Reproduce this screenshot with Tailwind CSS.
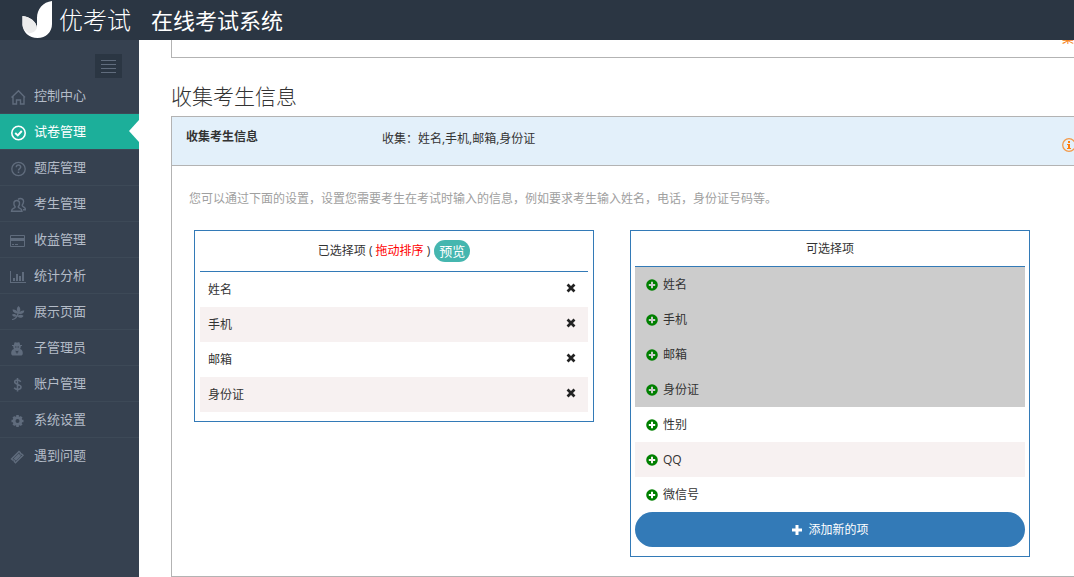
<!DOCTYPE html>
<html lang="zh-CN">
<head>
<meta charset="utf-8">
<title>在线考试系统</title>
<script src="https://cdn.jsdelivr.net/npm/@tailwindcss/browser@4"></script>
</head>
<body class="flex h-screen flex-col overflow-hidden bg-white font-['Open_Sans','Noto_Sans_CJK_SC',sans-serif] text-xs text-[#333]">
<svg class="hidden" aria-hidden="true">
  <symbol id="plus-circle" viewBox="0 0 12 12"><path fill="green" fill-rule="evenodd" d="M6 .2a5.800 5.800 0 1 1 0 11.600A5.800 5.800 0 0 1 6 .2zM5 2.800V5H2.800v2H5v2.200h2V7h2.200V5H7V2.800z"/></symbol>
  <symbol id="cross" viewBox="0 0 10 10"><path d="M2.500 2.500 7.500 7.500M7.500 2.500 2.500 7.500" stroke="#222" stroke-width="2.700" stroke-linecap="square"/></symbol>
</svg>

<header class="flex h-10 shrink-0 items-center bg-[#2b3643] pl-[22px] text-white">
  <a href="#" class="flex items-center gap-[7px]">
    <svg class="mb-[2px] h-[38px] w-[30px]" viewBox="0 0 30 38" aria-hidden="true">
      <path fill="#fff" d="M30 1v23c0 8-6 14-14.500 14C7 38 1 32 .5 25V16C8 17 14 21 15 28V18C15 9 21 2 30 1z"/>
      <path fill="#ececec" d="M.5 16C8 17 14 21 15 28c-1 3-4 5-8 5.500C3 31 .5 28 .5 25z"/>
    </svg>
    <span class="text-2xl leading-10 font-light">优考试</span>
  </a>
  <span class="ml-5 text-[22px] leading-10">在线考试系统</span>
</header>

<div class="flex min-h-0 flex-1">
  <aside class="w-[139px] shrink-0 bg-[#364150]">
    <div class="flex justify-end pt-[14px] pr-[17px]">
      <button aria-label="收起菜单" class="flex h-6 w-[27px] items-center justify-center bg-[#2b3643]">
        <svg class="h-[13px] w-[15px]" viewBox="0 0 15 13" stroke="#606c7d"><path d="M0 .5h15M0 4.500h15M0 8.500h15M0 12.500h15"/></svg>
      </button>
    </div>
    <nav class="text-[13px] leading-[35px] text-[#b4bcc8]">
      <a href="#" class="flex items-center gap-2 border-b border-[#3d4957] pl-[10px]">
        <svg class="mt-[2px] size-4 shrink-0" viewBox="0 0 16 16" fill="none" stroke="#606c7d" stroke-width="1.400"><path d="M1.500 8.500 8.500 1.800l6.500 6.700M3 7.500V15h3.500v-4h4v4H14V7.500"/></svg>控制中心</a>
      <a href="#" aria-current="page" class="relative flex items-center gap-2 border-b border-[#3d4957] bg-[#1caf9a] bg-clip-padding pl-[10px] text-white">
        <svg class="mt-[2px] size-4 shrink-0" viewBox="0 0 16 16" fill="none" stroke="#fff" stroke-width="1.600"><circle cx="8.500" cy="8" r="6.700"/><path d="m5.200 8 2.600 2.500 4-4.500" stroke-width="1.900"/></svg>试卷管理
        <svg class="absolute top-[6px] right-0 h-[22px] w-[10px]" viewBox="0 0 10 22" fill="#fff"><path d="M10 0v22L0 11z"/></svg></a>
      <a href="#" class="flex items-center gap-2 border-b border-[#3d4957] pl-[10px]">
        <svg class="mt-[2px] size-4 shrink-0" viewBox="0 0 16 16" fill="none" stroke="#606c7d" stroke-width="1.300"><circle cx="8.500" cy="8" r="6.700"/><path d="M6.300 6.300c0-3 4.400-2.800 4.400-.3 0 1.600-2.200 1.700-2.200 3.500M8.500 10.500V12" stroke-width="1.500"/></svg>题库管理</a>
      <a href="#" class="flex items-center gap-2 border-b border-[#3d4957] pl-[10px]">
        <svg class="mt-[2px] size-4 shrink-0" viewBox="0 0 16 16" fill="none" stroke="#606c7d" stroke-width="1.400"><path d="M5.200 10C3 7 3.500 3.500 6.700 3.500S10.500 7 8.200 10c0 1.500 3.800 1 3.800 4.300H1.500C1.500 11 5.200 11.500 5.200 10z"/><path d="M8 2.500c.7-.8 1.500-1 2.500-1 3.300 0 4 3.500 1.700 6.700 0 1.800 3.300 1.500 3.300 4.500H13"/></svg>考生管理</a>
      <a href="#" class="flex items-center gap-2 border-b border-[#3d4957] pl-[10px]">
        <svg class="mt-[2px] size-4 shrink-0" viewBox="0 0 16 16" fill="#606c7d"><path fill-rule="evenodd" d="M1 2h13a1 1 0 0 1 1 1v10a1 1 0 0 1-1 1H1a1 1 0 0 1-1-1V3a1 1 0 0 1 1-1zm0 1v2h13V3zm0 5v5h13V8z"/><path d="M2 11h2v1H2zM5 11h3v1H5z"/></svg>收益管理</a>
      <a href="#" class="flex items-center gap-2 border-b border-[#3d4957] pl-[10px]">
        <svg class="mt-[2px] size-4 shrink-0" viewBox="0 0 16 16" fill="#606c7d"><path d="M0 2h1v11h15v1H0zM3 9h2v3H3zM6 5h2v7H6zM9 7h2v5H9zM12 3h2v9h-2z"/></svg>统计分析</a>
      <a href="#" class="flex items-center gap-2 border-b border-[#3d4957] pl-[10px]">
        <svg class="mt-[2px] size-4 shrink-0" viewBox="0 0 16 16" fill="#606c7d"><path d="M2 15c2.500 0 4.500-1.300 5.500-3.500 2 2 5.200 1.500 6-.8-1.700-1.200-3.700-1.200-5.400-.2l.7-1.800c3 .8 5.400-.7 5.500-3.200-2.200-.3-4 .5-4.900 2C11 5.500 10.500 2.500 8.500 1 6.700 2.500 6.300 4.800 7.700 7 6.700 5.200 4.700 4 2.500 4.500c.2 2.500 2 4 4.900 3.900l-.9 2C5.200 8.800 3.500 8.500 2 9.500c.6 1.700 2 2.500 4 2.100C5 13.300 3.700 14 2 14z"/></svg>展示页面</a>
      <a href="#" class="flex items-center gap-2 border-b border-[#3d4957] pl-[10px]">
        <svg class="mt-[2px] size-4 shrink-0" viewBox="0 0 16 16" fill="#606c7d"><path fill-rule="evenodd" d="M4.500 1.500c1-.8 1.500 0 2.500 0s1.500-.8 2.500 0l.7 2.500H12v1h-1.200c0 1.500-.3 2.200-.8 3 2 .5 2.800 2 2.800 4.200 0 1.500-.8 2.300-2.200 2.300H3.400c-1.400 0-2.200-.8-2.200-2.300C1.200 10 2 8.500 4 8c-.5-.8-.8-1.500-.8-3H2V4h1.800zM5 5.500v1h1.500v-1zm2.500 0v1H9v-1zM5.500 9.500l.7 3.500.8-2.500.8 2.500.7-3.500-1.500.8z"/></svg>子管理员</a>
      <a href="#" class="flex items-center gap-2 border-b border-[#3d4957] pl-[10px]">
        <svg class="mt-[2px] size-4 shrink-0" viewBox="0 0 16 16" fill="none" stroke="#606c7d" stroke-width="1.600"><path d="M7.500 1v13.500M10.700 4.800C9.500 2.500 4.700 2.300 4.700 5.100c0 3 6.300 1.800 6.300 5 0 3-5.300 3-6.800.7"/></svg>账户管理</a>
      <a href="#" class="flex items-center gap-2 border-b border-[#3d4957] pl-[10px]">
        <svg class="mt-[2px] size-4 shrink-0" viewBox="0 0 16 16" fill="none" stroke="#606c7d"><circle cx="7.500" cy="8" r="3.400" stroke-width="2.800"/><path d="M7.500 2v2M7.500 12v2M1.500 8h2M11.500 8h2M3.300 3.800l1.400 1.400M10.300 10.800l1.400 1.400M11.700 3.800l-1.400 1.400M4.700 10.800l-1.400 1.400" stroke-width="2.600"/></svg>系统设置</a>
      <a href="#" class="flex items-center gap-2 pl-[10px]">
        <svg class="mt-[2px] size-4 shrink-0" viewBox="0 0 16 16" fill="none" stroke="#606c7d"><path d="M1.500 10 9 2.500l1.200 1a1.200 1.200 0 0 0 1.500 1.500L13 6.200 5.500 13.700l-1.200-1.200A1.200 1.200 0 0 0 2.700 11z" stroke-width="1.400"/><path d="m4.800 10.600 5-5" stroke-width="3.400"/></svg>遇到问题</a>
    </nav>
  </aside>

  <main class="min-w-0 flex-1 overflow-hidden pl-8">
    <section class="flex h-[18px] items-start justify-end border-b border-l border-[#b3b3b3]">
      <span class="-mt-[7px] leading-3 text-[#f58220]">集</span>
    </section>

    <h2 class="mt-[22px] mb-1 text-[21px] leading-8 font-light">收集考生信息</h2>

    <section class="border-y border-l border-[#b3b3b3]">
      <div class="flex h-12 bg-[#e3f0fa] pl-[14px]">
        <h3 class="w-[196px] shrink-0 pt-[10px] leading-5 font-bold">收集考生信息</h3>
        <p class="flex-1 pt-3 leading-5">收集：姓名,手机,邮箱,身份证</p>
        <button aria-label="说明" class="mt-[21px] -mr-[2px] h-[14px] w-[14px]">
          <svg class="size-[14px]" viewBox="0 0 14 14"><circle cx="7" cy="7" r="6.300" fill="none" stroke="#f39a4a" stroke-width="1.300"/><path fill="#ff7f0e" d="M6 3h2v2H6zM5 6h3v4h1v1H5v-1h1V7H5z"/></svg>
        </button>
      </div>
      <div class="border-t border-[#b3b3b3] pt-[23px] pr-11 pb-[19px] pl-[22px]">
        <p class="-ml-[5px] leading-5 text-[#a0a0a0]">您可以通过下面的设置，设置您需要考生在考试时输入的信息，例如要求考生输入姓名，电话，身份证号码等。</p>
        <div class="mt-[21px] grid grid-cols-2 items-start gap-x-9">
          <section class="border border-[#337ab7] px-[5px] pb-[9px]">
            <div class="flex h-[41px] items-center justify-center gap-1 border-b border-[#337ab7]">
              <h4>已选择项 ( <span class="text-[#f00]">拖动排序</span> )</h4>
              <button class="rounded-full bg-[#45b6af] px-[5px] text-[13px] leading-[22px] text-white">预览</button>
            </div>
            <ul class="leading-[35px]">
              <li class="flex items-center justify-between pr-3 pl-2">姓名<button aria-label="移除姓名"><svg class="mb-1 size-[10px]"><use href="#cross"/></svg></button></li>
              <li class="flex items-center justify-between bg-[#f7f1f1] pr-3 pl-2">手机<button aria-label="移除手机"><svg class="mb-1 size-[10px]"><use href="#cross"/></svg></button></li>
              <li class="flex items-center justify-between pr-3 pl-2">邮箱<button aria-label="移除邮箱"><svg class="mb-1 size-[10px]"><use href="#cross"/></svg></button></li>
              <li class="flex items-center justify-between bg-[#f7f1f1] pr-3 pl-2">身份证<button aria-label="移除身份证"><svg class="mb-1 size-[10px]"><use href="#cross"/></svg></button></li>
            </ul>
          </section>
          <section class="border border-[#337ab7] px-1 pb-[9px]">
            <h4 class="border-b border-[#337ab7] text-center leading-[35px]">可选择项</h4>
            <ul class="leading-[35px]">
              <li class="bg-[#ccc]"><button class="flex w-full items-center gap-[5px] pl-[11px]"><svg class="size-3"><use href="#plus-circle"/></svg>姓名</button></li>
              <li class="bg-[#ccc]"><button class="flex w-full items-center gap-[5px] pl-[11px]"><svg class="size-3"><use href="#plus-circle"/></svg>手机</button></li>
              <li class="bg-[#ccc]"><button class="flex w-full items-center gap-[5px] pl-[11px]"><svg class="size-3"><use href="#plus-circle"/></svg>邮箱</button></li>
              <li class="bg-[#ccc]"><button class="flex w-full items-center gap-[5px] pl-[11px]"><svg class="size-3"><use href="#plus-circle"/></svg>身份证</button></li>
              <li><button class="flex w-full items-center gap-[5px] pl-[11px]"><svg class="size-3"><use href="#plus-circle"/></svg>性别</button></li>
              <li class="bg-[#f7f1f1]"><button class="flex w-full items-center gap-[5px] pl-[11px]"><svg class="size-3"><use href="#plus-circle"/></svg>QQ</button></li>
              <li><button class="flex w-full items-center gap-[5px] pl-[11px]"><svg class="size-3"><use href="#plus-circle"/></svg>微信号</button></li>
            </ul>
            <button class="flex w-full items-center justify-center gap-[5px] rounded-full bg-[#337ab7] leading-[35px] text-white"><svg class="mt-[1px] size-3" viewBox="0 0 12 12"><path d="M6 1v10M1 6h10" stroke="#fff" stroke-width="3"/></svg>添加新的项</button>
          </section>
        </div>
      </div>
    </section>
  </main>
</div>
</body>
</html>
